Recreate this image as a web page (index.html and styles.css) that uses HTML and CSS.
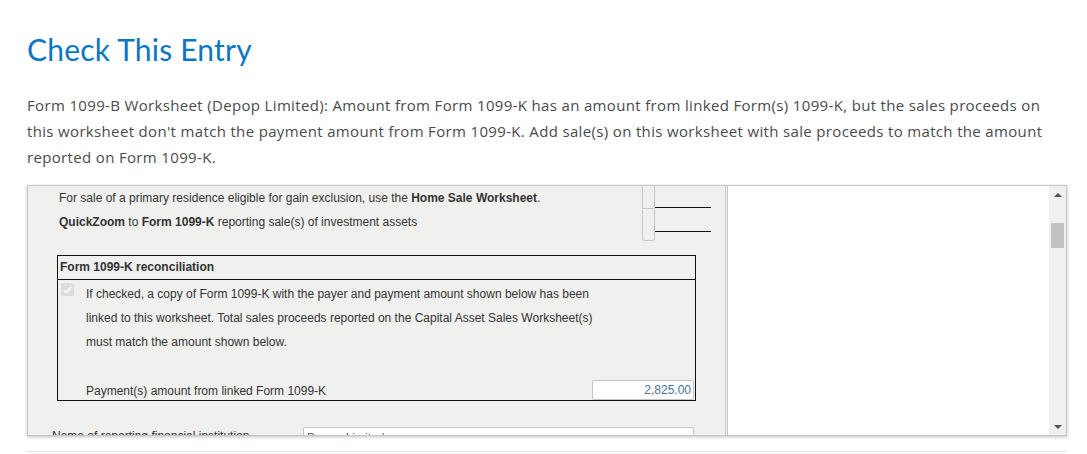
FILE: index.html
```html
<!DOCTYPE html>
<html>
<head>
<meta charset="utf-8">
<link rel="stylesheet" href="styles.css">
</head>
<body>
<div class="page">
  <h1 class="title">Check This Entry</h1>
  <p class="message">Form 1099-B Worksheet (Depop Limited): Amount from Form 1099-K has an amount from linked Form(s) 1099-K, but the sales proceeds on this worksheet don't match the payment amount from Form 1099-K. Add sale(s) on this worksheet with sale proceeds to match the amount reported on Form 1099-K.</p>

  <div class="frame">
    <div class="form-pane">
      <div class="top-row r1">
        <div class="top-text">For sale of a primary residence eligible for gain exclusion, use the <b>Home Sale Worksheet</b>.</div>
        <div class="cell c1"></div>
        <div class="rule"></div>
      </div>
      <div class="top-row r2">
        <div class="top-text"><b>QuickZoom</b> to <b>Form 1099-K</b> reporting sale(s) of investment assets</div>
        <div class="cell c2"></div>
        <div class="rule"></div>
      </div>

      <div class="recon">
        <div class="recon-head">Form 1099-K reconciliation</div>
        <div class="recon-check">
          <span class="chk"><svg width="9" height="8" viewBox="0 0 9 8"><path d="M1 4.2 L3.4 6.5 L8 1.2" fill="none" stroke="#fff" stroke-width="1.8"/></svg></span>
          <div class="recon-text">If checked, a copy of Form 1099-K with the payer and payment amount shown below has been<br>linked to this worksheet. Total sales proceeds reported on the Capital Asset Sales Worksheet(s)<br>must match the amount shown below.</div>
        </div>
        <div class="recon-pay">
          <span class="pay-label">Payment(s) amount from linked Form 1099-K</span>
          <span class="amount">2,825.00</span>
        </div>
      </div>

      <div class="inst-row">
        <span class="inst-label">Name of reporting financial institution</span>
        <span class="inst-input">Depop Limited</span>
      </div>
    </div>
    <div class="side-pane"></div>
    <div class="scrollbar">
      <span class="arrow up"></span>
      <span class="thumb"></span>
      <span class="arrow down"></span>
    </div>
  </div>
  <div class="bottom-rule"></div>
</div>
</body>
</html>
```

FILE: styles.css
```css
html, body {
  margin: 0;
  padding: 0;
  background: #fff;
}

.page {
  padding: 26px 20px 0 27px;
}

.title {
  margin: 0;
  font-family: "Lato", "Open Sans", sans-serif;
  font-weight: 400;
  font-size: 30px;
  line-height: 46px;
  color: #0b77c1;
  letter-spacing: 0.2px;
}

.message {
  margin: 20px 0 0 0;
  width: 1026px;
  font-family: "Open Sans", "Lato", sans-serif;
  font-size: 15px;
  line-height: 26px;
  color: #4a4b4e;
  letter-spacing: 0.34px;
}

.frame {
  margin-top: 15px;
  width: 1040px;
  height: 251px;
  display: flex;
  box-sizing: border-box;
  border: 1px solid #c6c6c6;
  box-shadow: 0 1px 3px rgba(0, 0, 0, 0.25);
  overflow: hidden;
  background: #fff;
}

.form-pane {
  width: 697px;
  flex: none;
  background: #f0f0ef;
  border-right: 3px double #c8c8c8;
  font-family: "Liberation Sans", Arial, sans-serif;
  font-size: 12px;
  color: #333;
  overflow: hidden;
}

.top-row {
  display: flex;
  align-items: flex-start;
}

.top-text {
  width: 583px;
  padding-left: 31px;
  line-height: 24px;
  flex: none;
}

.top-text b {
  font-weight: 700;
}

.cell {
  width: 11px;
  flex: none;
  border: 1px solid #c6c6c6;
  border-top: none;
  background: #f0f0ef;
}

.c1 {
  height: 23px;
  margin-top: -1px;
}

.c2 {
  height: 30px;
  border-radius: 0 0 3px 3px;
}

.rule {
  width: 56px;
  height: 21px;
  border-bottom: 1px solid #111;
  flex: none;
}

.recon {
  margin: 14px 0 0 29px;
  width: 637px;
  border: 1px solid #111;
}

.recon-head {
  font-weight: 700;
  line-height: 23px;
  padding-left: 2px;
  border-bottom: 1px solid #111;
}

.recon-check {
  display: flex;
  align-items: flex-start;
  padding-top: 2px;
}

.chk {
  width: 13px;
  height: 13px;
  margin: 1px 0 0 3px;
  border-radius: 2px;
  background: #dcdcdc;
  display: flex;
  align-items: center;
  justify-content: center;
  flex: none;
}

.recon-text {
  margin-left: 12px;
  line-height: 24px;
}

.recon-pay {
  display: flex;
  justify-content: space-between;
  align-items: center;
  margin-top: 24px;
  height: 22px;
  padding-left: 28px;
}

.pay-label {
  line-height: 22px;
  padding-top: 3px;
}

.amount {
  width: 102px;
  height: 20px;
  box-sizing: border-box;
  border: 1px solid #c4c4c4;
  border-radius: 2px;
  background: #fff;
  text-align: right;
  padding-right: 2px;
  line-height: 18px;
  color: #4a7399;
  margin-right: 1px;
  margin-bottom: -1px;
}

.inst-row {
  display: flex;
  align-items: flex-start;
  margin-top: 26px;
  padding-left: 24px;
}

.inst-label {
  width: 251px;
  line-height: 18px;
  flex: none;
}

.inst-input {
  width: 391px;
  height: 20px;
  box-sizing: border-box;
  border: 1px solid #c4c4c4;
  border-radius: 2px;
  background: #fff;
  padding-left: 3px;
  line-height: 20px;
  color: #4a7399;
}

.side-pane {
  flex: 1;
  background: #fff;
}

.scrollbar {
  width: 17px;
  flex: none;
  background: #f0f0f0;
  display: flex;
  flex-direction: column;
  align-items: center;
}

.arrow {
  width: 0;
  height: 0;
  border-left: 4px solid transparent;
  border-right: 4px solid transparent;
}

.arrow.up {
  margin-top: 7px;
  border-bottom: 4px solid #505050;
}

.arrow.down {
  margin-top: auto;
  margin-bottom: 6px;
  border-top: 4px solid #505050;
}

.thumb {
  margin-top: 26px;
  width: 13px;
  height: 25px;
  background: #c1c1c1;
}

.bottom-rule {
  margin-top: 15px;
  width: 1040px;
  height: 1px;
  background: #e6e6e6;
}
```
